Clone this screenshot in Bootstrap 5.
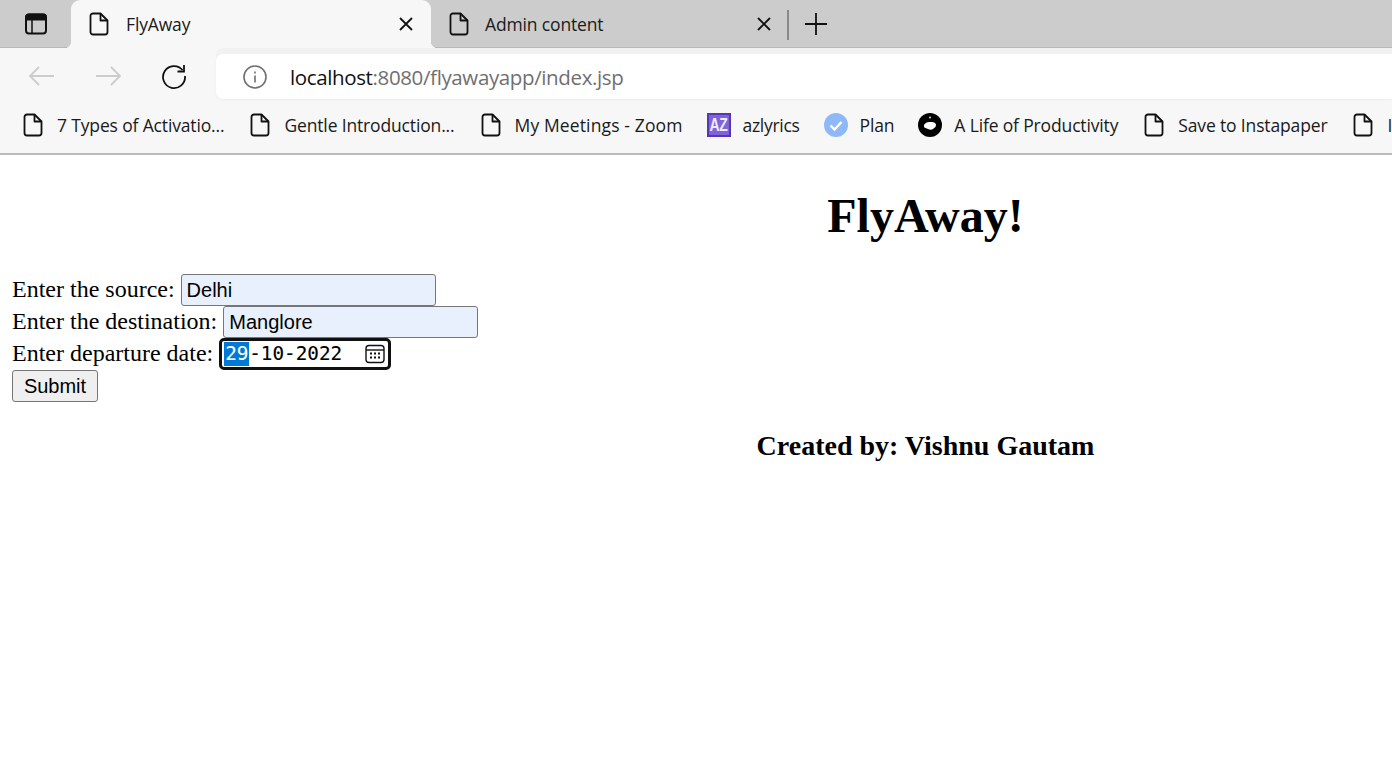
<!DOCTYPE html>
<html lang="en">
<head>
<meta charset="utf-8">
<title>FlyAway</title>
<link href="https://cdn.jsdelivr.net/npm/bootstrap@5.3.0/dist/css/bootstrap.min.css" rel="stylesheet">
<style>
html,body{overflow:hidden;height:783px;background:#fff}
body{font-family:"Liberation Serif",serif;font-size:24px;color:#000;line-height:32px}
.chrome-ui{font-family:"Open Sans","Noto Sans",sans-serif;color:#1a1a1a}
.tabstrip{height:48px;background:#ccc;border-bottom:1px solid #b8b8b8}
.strip-panel{width:71px;flex:none}
.tabitem{width:360px;height:47px;flex:none;padding-left:18px;font-size:17.500px;letter-spacing:-.15px;border-radius:9px 9px 0 0;position:relative}
.tabitem.second{width:358px}
.tabitem.on{background:#f7f7f7;height:48px;margin-bottom:-1px;z-index:1}
.tabitem.on::before,.tabitem.on::after{content:"";position:absolute;bottom:0;width:7px;height:7px}
.tabitem.on::before{left:-7px;background:radial-gradient(circle at 0 0,transparent 7px,#f7f7f7 7.500px)}
.tabitem.on::after{right:-7px;background:radial-gradient(circle at 100% 0,transparent 7px,#f7f7f7 7.500px)}
.tabitem .tx{margin-left:16px;flex:1}
.tabitem.on .tx{margin-left:17px}
.tabitem .cl{margin-right:18px}
.tab-sep{width:2px;height:30px;background:#8a8a8a;margin-left:-2px;margin-top:10px}
.plus{margin-left:16px;margin-top:13px}
.toolrow{height:51px;background:#f7f7f7;padding-top:6px}
.toolbtns{width:216px;flex:none;height:44px;padding-left:24px}
.gap-fwd{margin-left:30px}
.gap-rel{margin-left:35px}
.addr{flex:1;height:45px;background:#fff;border-radius:7px 0 0 7px;font-size:20.500px;letter-spacing:-.37px;padding-left:27px;box-shadow:0 -6px 0 #f1f1f1,0 1px 2px #ececec}
.addr .pre{color:#111;margin-left:23px}
.addr .post{color:#6f6f6f}
.bookbar{height:56px;background:#f7f7f7;border-bottom:2px solid #bbb;font-size:17.500px;letter-spacing:-.15px;padding-left:21px;gap:24px;white-space:nowrap;padding-bottom:2px;overflow:hidden}
.bm{gap:12px;flex:none}
.bm-ic{width:24px;height:24px;flex:none}
.ls-wide{letter-spacing:.13px}
.ls-tight{letter-spacing:-.3px}
.azbox{background:#7f63d8;border:2px solid #5a34b8;color:#eeeaff;font:700 14px/20px "Liberation Sans",sans-serif;text-align:center;letter-spacing:-.4px}
.azbox span{display:inline-block;transform:scaleY(1.25)}
.flyhead{font-family:"Liberation Serif",serif;font-weight:700;font-size:48px;line-height:55px;margin:33px 0 31px;text-align:center}
.flyfoot{font-family:"Liberation Serif",serif;font-weight:700;font-size:28px;line-height:32px;margin:28px 0;text-align:center}
.pagebody{width:1851px;padding:0 12px}
.frow{height:32px;gap:6px}
.lbl{padding-bottom:2px}
.finput{width:255px;height:32px;background:#e8f0fe;border:1px solid #767676;border-radius:3px;font:20px/30px "Liberation Sans",sans-serif;padding:0 5px;color:#000}
.fdate{width:172px;height:32px;border:3px solid #101010;border-radius:5px;font:19.300px/24px "DejaVu Sans Mono","Liberation Mono",monospace;padding:0 3px 0 2px;background:#fff;color:#000;-webkit-text-stroke:.12px currentColor}
.fdate .sel{background:#0078d7;color:#fff;width:25px;display:inline-block;text-align:center;height:24px}
.fsubmit{width:86px;height:32px;background:#efefef;border:1px solid #767676;border-radius:3px;font:20px/28px "Liberation Sans",sans-serif;padding:0;color:#000}
</style>
</head>
<body>
<div class="chrome-ui">
  <div class="tabstrip d-flex">
    <div class="strip-panel d-flex align-items-center justify-content-center">
      <svg width="24" height="24" viewBox="0 0 24 24" fill="none" stroke="#111" stroke-width="2"><rect x="2" y="2.500" width="20" height="19" rx="3"/><path d="M2 5.500a3 3 0 0 1 3-3h14a3 3 0 0 1 3 3v2H2z" fill="#111"/><path d="M8 7v14" stroke-width="1.500"/></svg>
    </div>
    <div class="tabitem on d-flex align-items-center">
      <svg width="20" height="24" viewBox="0 0 20 24" fill="none" stroke="#111" stroke-width="1.800" stroke-linejoin="round"><path d="M4 1.500h7.500l7 7V20a2.500 2.500 0 0 1-2.500 2.500H4A2.500 2.500 0 0 1 1.500 20V4A2.500 2.500 0 0 1 4 1.500z"/><path d="M11.500 1.500V8.500h7"/></svg>
      <span class="tx">FlyAway</span>
      <svg class="cl" width="14" height="14" viewBox="0 0 14 14" stroke="#111" stroke-width="1.800"><path d="M1 1l12 12M13 1L1 13"/></svg>
    </div>
    <div class="tabitem second d-flex align-items-center">
      <svg width="20" height="24" viewBox="0 0 20 24" fill="none" stroke="#111" stroke-width="1.800" stroke-linejoin="round"><path d="M4 1.500h7.500l7 7V20a2.500 2.500 0 0 1-2.500 2.500H4A2.500 2.500 0 0 1 1.500 20V4A2.500 2.500 0 0 1 4 1.500z"/><path d="M11.500 1.500V8.500h7"/></svg>
      <span class="tx">Admin content</span>
      <svg class="cl" width="14" height="14" viewBox="0 0 14 14" stroke="#111" stroke-width="1.800"><path d="M1 1l12 12M13 1L1 13"/></svg>
    </div>
    <div class="tab-sep"></div>
    <svg class="plus" width="22" height="22" viewBox="0 0 22 22" stroke="#111" stroke-width="1.800"><path d="M11 0v22M0 11h22"/></svg>
  </div>
  <div class="toolrow d-flex">
    <div class="toolbtns d-flex align-items-center">
      <svg width="36" height="24" viewBox="0 0 36 24" fill="none" stroke="#ccc" stroke-width="1.800"><path d="M6 12h24M15 3l-9 9 9 9"/></svg>
      <svg class="gap-fwd" width="36" height="24" viewBox="0 0 36 24" fill="none" stroke="#ccc" stroke-width="1.800"><path d="M6 12h24M21 3l9 9-9 9"/></svg>
      <svg class="gap-rel" width="26" height="26" viewBox="0 0 26 26" fill="none" stroke="#111" stroke-width="1.800"><path d="M21.500 7A11 11 0 1 0 24 13"/><path d="M23 2v6.500h-6.500"/></svg>
    </div>
    <div class="addr d-flex align-items-center">
      <svg width="24" height="24" viewBox="0 0 24 24" fill="none" stroke="#6f6f6f" stroke-width="1.600"><circle cx="12" cy="12" r="11"/><path d="M12 10.500v7M12 6.500v2"/></svg>
      <span class="pre">localhost</span><span class="post">:8080/flyawayapp/index.jsp</span>
    </div>
  </div>
  <div class="bookbar d-flex align-items-center">
    <div class="bm d-flex align-items-center"><svg class="bm-ic" viewBox="0 0 24 24" fill="none" stroke="#111" stroke-width="1.800" stroke-linejoin="round"><path d="M6 1.500h7.500l7 7V20a2.500 2.500 0 0 1-2.500 2.500H6A2.500 2.500 0 0 1 3.500 20V4A2.500 2.500 0 0 1 6 1.500z"/><path d="M13.500 1.500V8.500h7"/></svg><span>7 Types of Activatio...</span></div>
    <div class="bm d-flex align-items-center"><svg class="bm-ic" viewBox="0 0 24 24" fill="none" stroke="#111" stroke-width="1.800" stroke-linejoin="round"><path d="M6 1.500h7.500l7 7V20a2.500 2.500 0 0 1-2.500 2.500H6A2.500 2.500 0 0 1 3.500 20V4A2.500 2.500 0 0 1 6 1.500z"/><path d="M13.500 1.500V8.500h7"/></svg><span>Gentle Introduction...</span></div>
    <div class="bm d-flex align-items-center"><svg class="bm-ic" viewBox="0 0 24 24" fill="none" stroke="#111" stroke-width="1.800" stroke-linejoin="round"><path d="M6 1.500h7.500l7 7V20a2.500 2.500 0 0 1-2.500 2.500H6A2.500 2.500 0 0 1 3.500 20V4A2.500 2.500 0 0 1 6 1.500z"/><path d="M13.500 1.500V8.500h7"/></svg><span class="ls-wide">My Meetings - Zoom</span></div>
    <div class="bm d-flex align-items-center"><div class="bm-ic azbox"><span>AZ</span></div><span class="ls-tight">azlyrics</span></div>
    <div class="bm d-flex align-items-center"><svg class="bm-ic" viewBox="0 0 24 24"><circle cx="12" cy="12" r="12" fill="#8fb8f8"/><path d="M6.500 12.500l4 4 7-7.500" fill="none" stroke="#fff" stroke-width="2.400"/></svg><span>Plan</span></div>
    <div class="bm d-flex align-items-center"><svg class="bm-ic" viewBox="0 0 24 24"><circle cx="12" cy="12" r="12" fill="#000"/><path d="M6 13c0-2.500 3-4 6-4s6 .5 6 3-2 3-3 4-3.500 1-5 0-4-.5-4-3z" fill="#fff"/><circle cx="12" cy="4.500" r="1" fill="#ddd"/></svg><span>A Life of Productivity</span></div>
    <div class="bm d-flex align-items-center"><svg class="bm-ic" viewBox="0 0 24 24" fill="none" stroke="#111" stroke-width="1.800" stroke-linejoin="round"><path d="M6 1.500h7.500l7 7V20a2.500 2.500 0 0 1-2.500 2.500H6A2.500 2.500 0 0 1 3.500 20V4A2.500 2.500 0 0 1 6 1.500z"/><path d="M13.500 1.500V8.500h7"/></svg><span>Save to Instapaper</span></div>
    <div class="bm d-flex align-items-center"><svg class="bm-ic" viewBox="0 0 24 24" fill="none" stroke="#111" stroke-width="1.800" stroke-linejoin="round"><path d="M6 1.500h7.500l7 7V20a2.500 2.500 0 0 1-2.500 2.500H6A2.500 2.500 0 0 1 3.500 20V4A2.500 2.500 0 0 1 6 1.500z"/><path d="M13.500 1.500V8.500h7"/></svg><span>Instapaper</span></div>
  </div>
</div>
<div class="pagebody">
  <h1 class="flyhead">FlyAway!</h1>
  <form onsubmit="return false">
    <div class="frow d-flex align-items-center"><label class="lbl" for="src">Enter the source:</label><input id="src" class="finput" type="text" value="Delhi"></div>
    <div class="frow d-flex align-items-center"><label class="lbl" for="dst">Enter the destination:</label><input id="dst" class="finput" type="text" value="Manglore"></div>
    <div class="frow d-flex align-items-center"><span class="lbl">Enter departure date:</span>
      <div class="fdate d-flex align-items-center"><span class="sel">29</span><span>-10-2022</span>
        <svg class="ms-auto" width="20" height="20" viewBox="0 0 20 20" fill="none" stroke="#111" stroke-width="1.400"><rect x="1" y="1.500" width="18" height="17" rx="3"/><path d="M1 6h18"/><path d="M5 9.500h2M9 9.500h2M13 9.500h2M5 13.500h2M9 13.500h2M13 13.500h2" stroke-width="2"/></svg>
      </div>
    </div>
    <div class="frow d-flex align-items-center"><button class="fsubmit" type="submit">Submit</button></div>
  </form>
  <h3 class="flyfoot">Created by: Vishnu Gautam</h3>
</div>
<script src="https://cdn.jsdelivr.net/npm/bootstrap@5.3.0/dist/js/bootstrap.bundle.min.js"></script>
</body>
</html>
